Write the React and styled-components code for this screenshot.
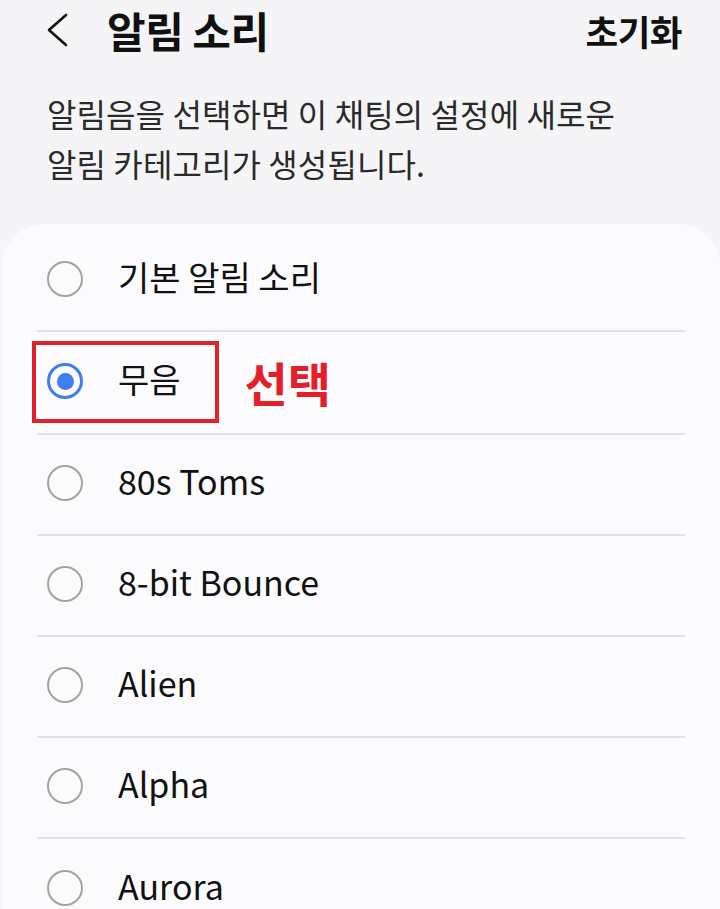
import styled, { createGlobalStyle } from 'styled-components';

const GlobalStyle = createGlobalStyle`
  html, body {
    margin: 0;
    padding: 0;
    background: #f5f5f7;
  }
  body {
    font-family: "Noto Sans CJK KR", "Noto Sans", sans-serif;
    color: #111;
  }
`;

const sounds = ['기본 알림 소리', '무음', '80s Toms', '8-bit Bounce', 'Alien', 'Alpha', 'Aurora'];
const selected = 1;

const App = () => {
  return (
    <Page>
      <GlobalStyle />
      <Header>
        <BackButton aria-label="뒤로">
          <svg width="24" height="34" viewBox="0 0 24 34">
            <polyline points="20,2 3,17 20,32" fill="none" stroke="#111" strokeWidth="2.6" strokeLinecap="round" strokeLinejoin="round" />
          </svg>
        </BackButton>
        <Title>알림 소리</Title>
        <ResetButton>초기화</ResetButton>
      </Header>
      <Description>
        알림음을 선택하면 이 채팅의 설정에 새로운<br />
        알림 카테고리가 생성됩니다.
      </Description>
      <Card>
        {sounds.map((name, i) => (
          <Row key={name} marked={i === selected} last={i === sounds.length - 1}>
            <Radio checked={i === selected} />
            <Label>{name}</Label>
            {i === selected ? (
              <>
                <Highlight />
                <Note>선택</Note>
              </>
            ) : null}
          </Row>
        ))}
      </Card>
    </Page>
  );
};

const Page = styled.div`
  width: 720px;
  height: 909px;
  overflow: hidden;
  background: #f5f5f7;
`;

const Header = styled.div`
  display: flex;
  align-items: center;
  height: 60px;
  padding: 0 38px 0 46px;
`;

const BackButton = styled.div`
  display: flex;
  align-items: center;
  width: 24px;
  height: 34px;
  margin-right: 37px;
`;

const Title = styled.h1`
  margin: 0;
  flex: 1;
  font-size: 42px;
  font-weight: 700;
  letter-spacing: -0.5px;
  line-height: 1;
  color: #111;
`;

const ResetButton = styled.div`
  font-size: 35.5px;
  font-weight: 700;
  letter-spacing: -0.5px;
  color: #111;
`;

const Description = styled.p`
  margin: 28px 0 0;
  padding: 0 47px;
  font-size: 32px;
  line-height: 50px;
  letter-spacing: 0.1px;
  color: #2a2a2a;
`;

const Card = styled.div`
  margin-top: 36px;
  margin-left: 2px;
  background: #fbfbfd;
  border-radius: 42px 42px 0 0;
  padding-top: 7px;
  height: 700px;
`;

const Row = styled.div`
  position: relative;
  box-sizing: border-box;
  display: flex;
  align-items: center;
  height: ${(p) => (p.marked ? '103px' : '101px')};
  padding-bottom: 3px;
  margin: 0 35px;
  border-bottom: ${(p) => (p.last ? 'none' : '2px solid #e2e2e4')};
`;

const Radio = styled.span`
  box-sizing: border-box;
  width: 36px;
  height: 36px;
  margin-left: 10px;
  border-radius: 50%;
  border: ${(p) => (p.checked ? '3.5px solid #3f7ef0' : '2.5px solid #a3a3a3')};
  display: flex;
  align-items: center;
  justify-content: center;
  &::after {
    content: '';
    display: ${(p) => (p.checked ? 'block' : 'none')};
    width: 17px;
    height: 17px;
    border-radius: 50%;
    background: #3f7ef0;
  }
`;

const Label = styled.span`
  margin-left: 35px;
  font-size: 34px;
  line-height: 1.2;
  padding-bottom: 3px;
  color: #111;
`;

const Highlight = styled.span`
  position: absolute;
  left: -5px;
  top: 9px;
  width: 187px;
  height: 82px;
  box-sizing: border-box;
  border: 4px solid #e3202a;
`;

const Note = styled.span`
  margin-left: 64px;
  font-size: 47px;
  font-weight: 700;
  color: #e3202a;
`;

export default App;
